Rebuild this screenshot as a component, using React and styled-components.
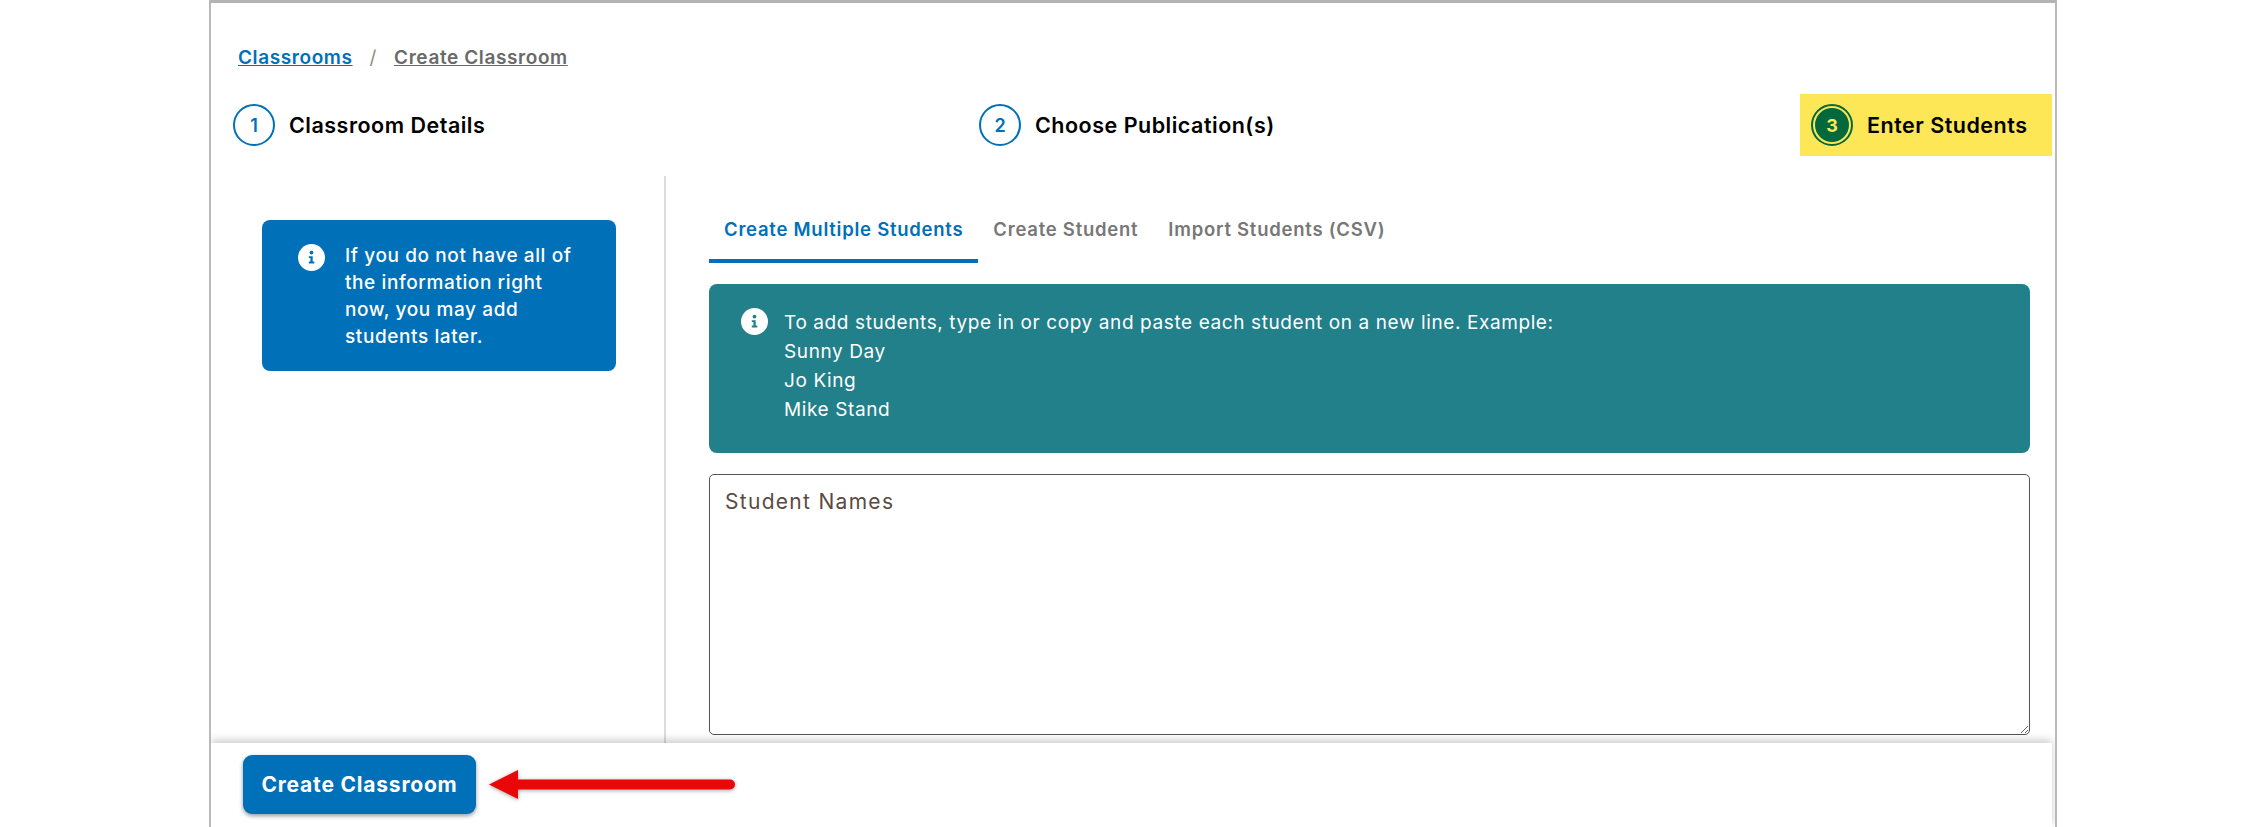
import React from "react";
import styled, { createGlobalStyle } from "styled-components";

const GlobalStyle = createGlobalStyle`
  html, body {
    margin: 0;
    padding: 0;
    background: #fff;
  }
  * {
    box-sizing: border-box;
  }
`;

const InfoIcon = ({ color }) => (
  <InfoSvg viewBox="0 0 27 27">
    <circle cx="13.5" cy="13.5" r="13.5" fill="#fff" />
    <circle cx="13.5" cy="8.6" r="1.9" fill={color} />
    <path
      d="M10.8 12.2h3.9v5.4h1.6v1.9h-5.5v-1.9h1.6v-3.5h-1.6z"
      fill={color}
    />
  </InfoSvg>
);

const App = () => {
  return (
    <Page>
      <GlobalStyle />
      <Frame>
        <Breadcrumb>
          <Crumb $active href="#">
            Classrooms
          </Crumb>
          <Slash>/</Slash>
          <Crumb href="#">Create Classroom</Crumb>
        </Breadcrumb>

        <Steps>
          <Step>
            <StepCircle>1</StepCircle>
            <StepLabel>Classroom Details</StepLabel>
          </Step>
          <Step>
            <StepCircle>2</StepCircle>
            <StepLabel>Choose Publication(s)</StepLabel>
          </Step>
          <CurrentStep>
            <CurrentCircle>
              <CurrentNumber>3</CurrentNumber>
            </CurrentCircle>
            <StepLabel>Enter Students</StepLabel>
          </CurrentStep>
        </Steps>

        <Body>
          <Aside>
            <SideNote>
              <InfoIcon color="#0070b8" />
              <SideText>
                If you do not have all of the information right now, you may add
                students later.
              </SideText>
            </SideNote>
          </Aside>

          <Main>
            <Tabs>
              <Tab $active>Create Multiple Students</Tab>
              <Tab>Create Student</Tab>
              <Tab>Import Students (CSV)</Tab>
            </Tabs>

            <Hint>
              <InfoIcon color="#218089" />
              <HintText>
                To add students, type in or copy and paste each student on a new
                line. Example:
                <br />
                Sunny Day
                <br />
                Jo King
                <br />
                Mike Stand
              </HintText>
            </Hint>

            <Names placeholder="Student Names" />
          </Main>
        </Body>

        <Footer>
          <CreateButton>Create Classroom</CreateButton>
          <ArrowSvg viewBox="0 0 248 32">
            <path
              d="M0 15.5 L29 1 V10.5 H241 a5 5 0 0 1 0 10 H29 V30 Z"
              fill="#e90707"
            />
          </ArrowSvg>
        </Footer>
      </Frame>
    </Page>
  );
};

export default App;

const Page = styled.div`
  width: 2261px;
  height: 827px;
  overflow: hidden;
  padding-left: 209px;
`;

const Frame = styled.div`
  width: 1848px;
  height: 827px;
  border-left: 2px solid #b9b9b9;
  border-right: 2px solid #b9b9b9;
  border-top: 3px solid #b4b4b4;
  display: flex;
  flex-direction: column;
  overflow: hidden;
`;

const Breadcrumb = styled.div`
  height: 91px;
  padding: 40px 0 0 27px;
  display: flex;
  align-items: flex-start;
  font-family: Inter, sans-serif;
  font-size: 19px;
  line-height: 30px;
  letter-spacing: 0.6px;
`;

const Crumb = styled.a`
  color: ${(props) => (props.$active ? "#0070b8" : "#6a6a6a")};
  text-decoration: underline;
  font-weight: 600;
`;

const Slash = styled.span`
  color: #8a8a8a;
  margin: 0 17px;
  font-weight: 400;
`;

const Steps = styled.div`
  height: 82px;
  padding-left: 22px;
  padding-right: 3px;
  display: flex;
  align-items: flex-start;
  justify-content: space-between;
`;

const Step = styled.div`
  display: flex;
  align-items: center;
  gap: 14px;
  height: 62px;
  width: 746px;
`;

const StepCircle = styled.div`
  width: 42px;
  height: 42px;
  border-radius: 50%;
  border: 2px solid #0070b8;
  color: #0070b8;
  display: flex;
  align-items: center;
  justify-content: center;
  font-family: Inter, sans-serif;
  font-size: 18px;
  font-weight: 600;
`;

const StepLabel = styled.div`
  font-family: Inter, sans-serif;
  font-size: 21.5px;
  letter-spacing: 0.5px;
  font-weight: 600;
  color: #000;
  white-space: nowrap;
`;

const CurrentStep = styled.div`
  width: 252px;
  height: 62px;
  flex: none;
  margin-left: auto;
  padding-left: 11px;
  display: flex;
  align-items: center;
  gap: 14px;
  background: #fde757;
`;

const CurrentCircle = styled.div`
  width: 42px;
  height: 42px;
  border-radius: 50%;
  border: 2px solid #03693d;
  padding: 2px;
  flex: none;
`;

const CurrentNumber = styled.div`
  width: 100%;
  height: 100%;
  border-radius: 50%;
  background: #03693d;
  color: #fde757;
  display: flex;
  align-items: center;
  justify-content: center;
  font-family: Inter, sans-serif;
  font-size: 18px;
  font-weight: 700;
`;

const Body = styled.div`
  flex: 1;
  min-height: 0;
  display: flex;
`;

const Aside = styled.div`
  width: 455px;
  flex: none;
  border-right: 2px solid #dcdcdc;
  padding: 44px 0 0 51px;
`;

const SideNote = styled.div`
  width: 354px;
  height: 151px;
  background: #0070b8;
  border-radius: 8px;
  padding: 24px 40px 0 36px;
  display: flex;
  align-items: flex-start;
  gap: 20px;
`;

const InfoSvg = styled.svg`
  width: 27px;
  height: 27px;
  flex: none;
`;

const SideText = styled.div`
  margin-top: -2px;
  font-family: Inter, sans-serif;
  font-size: 19px;
  letter-spacing: 0.6px;
  line-height: 27px;
  font-weight: 500;
  color: #fff;
`;

const Main = styled.div`
  flex: 1;
  min-width: 0;
  padding-left: 43px;
`;

const Tabs = styled.div`
  height: 87px;
  padding-top: 26px;
  display: flex;
`;

const Tab = styled.div`
  height: 61px;
  padding: 14px 15px 0;
  border-bottom: 4px solid ${(props) => (props.$active ? "#0070b8" : "transparent")};
  color: ${(props) => (props.$active ? "#0070b8" : "#777")};
  font-family: Inter, sans-serif;
  font-size: 18.5px;
  letter-spacing: 0.75px;
  line-height: 26px;
  font-weight: 600;
  white-space: nowrap;
`;

const Hint = styled.div`
  width: 1321px;
  height: 169px;
  margin-top: 21px;
  background: #218089;
  border-radius: 8px;
  padding: 24px 0 0 32px;
  display: flex;
  align-items: flex-start;
  gap: 16px;
`;

const HintText = styled.div`
  font-family: Inter, sans-serif;
  font-size: 19px;
  letter-spacing: 0.6px;
  line-height: 29px;
  color: #fff;
`;

const Names = styled.textarea`
  display: block;
  width: 1321px;
  height: 261px;
  margin-top: 21px;
  padding: 13px 15px;
  border: 1.5px solid #555;
  border-radius: 5px;
  outline: none;
  font-family: Inter, sans-serif;
  font-size: 21px;
  letter-spacing: 1.3px;
  line-height: 28px;
  &::placeholder {
    color: #5a4a42;
    opacity: 1;
  }
`;

const Footer = styled.div`
  height: 84px;
  flex: none;
  margin-right: 3px;
  padding: 12px 0 0 32px;
  display: flex;
  align-items: flex-start;
  gap: 13px;
  background: #fff;
  box-shadow: 0 -3px 8px rgba(0, 0, 0, 0.2);
  position: relative;
`;

const CreateButton = styled.button`
  width: 233px;
  height: 59px;
  border: none;
  border-radius: 9px;
  background: #0070b8;
  box-shadow: 0 2px 4px rgba(0, 0, 0, 0.4);
  color: #fff;
  font-family: Inter, sans-serif;
  font-size: 21px;
  letter-spacing: 0.8px;
  font-weight: 700;
`;

const ArrowSvg = styled.svg`
  width: 248px;
  height: 32px;
  margin-top: 14px;
  filter: drop-shadow(0 1px 2px rgba(0, 0, 0, 0.35));
`;
